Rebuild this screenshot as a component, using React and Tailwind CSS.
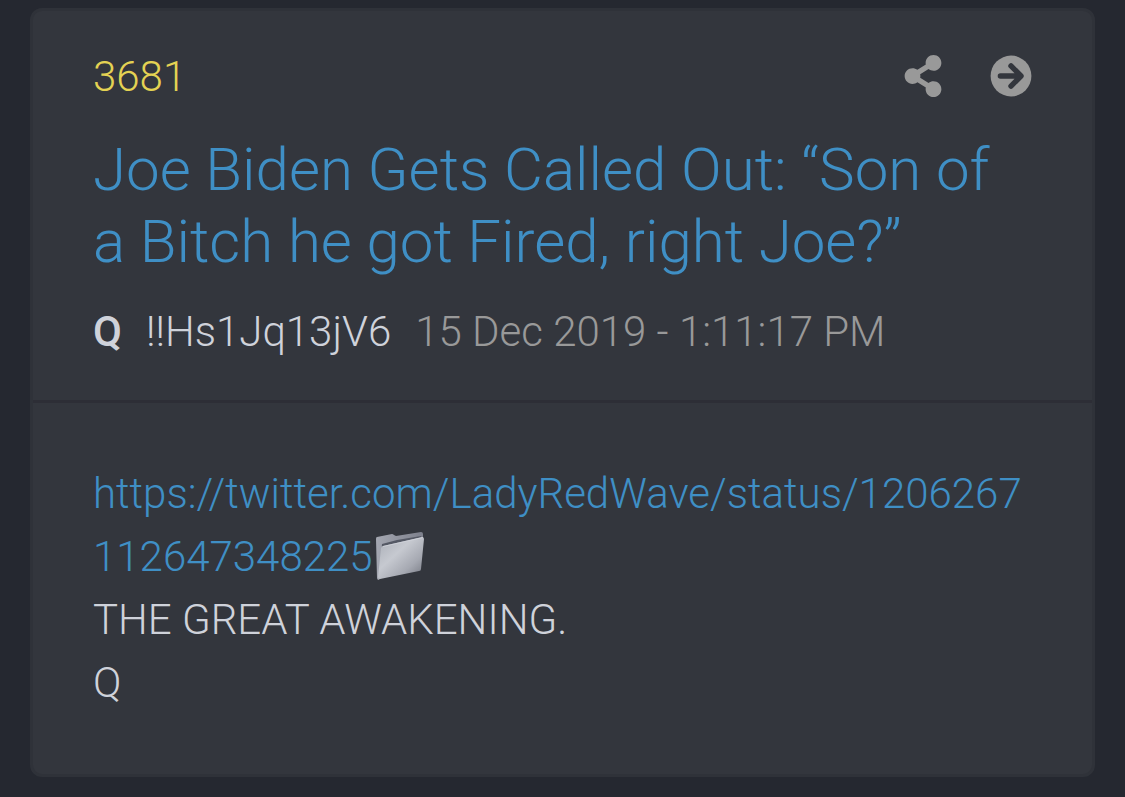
import React from 'react';
import { FaShareAlt } from 'react-icons/fa';

const post = {
  number: '3681',
  title: 'Joe Biden Gets Called Out: “Son of a Bitch he got Fired, right Joe?”',
  name: 'Q',
  trip: '!!Hs1Jq13jV6',
  date: '15 Dec 2019 - 1:11:17 PM',
  link: 'https://twitter.com/LadyRedWave/status/1206267112647348225',
  lines: ['THE GREAT AWAKENING.', 'Q'],
};

function ArrowIcon() {
  return (
    <svg viewBox="0 0 42 42" className="size-[42px]" aria-hidden="true">
      <circle cx="21" cy="21" r="20.4" fill="currentColor" />
      <path d="M10.4 21 H30 M21 10.9 L31 21 L21 31.1" fill="none" stroke="#33363d" strokeWidth="5.4" strokeLinecap="round" strokeLinejoin="round" />
    </svg>
  );
}

function FolderIcon() {
  return (
    <svg viewBox="0 0 52 57" className="inline-block w-[52px] h-[57px] align-bottom" aria-hidden="true">
      <defs>
        <linearGradient id="folderFront" x1="0" y1="0" x2="1" y2="1">
          <stop offset="0" stopColor="#a9adb6" />
          <stop offset="0.4" stopColor="#c6c9d0" />
          <stop offset="0.7" stopColor="#a6a9b2" />
          <stop offset="1" stopColor="#70737d" />
        </linearGradient>
        <linearGradient id="folderBack" x1="0" y1="0" x2="1" y2="0">
          <stop offset="0" stopColor="#a4a7b1" />
          <stop offset="1" stopColor="#7d808c" />
        </linearGradient>
      </defs>
      <path d="M4 6 L19 3 Q20 3 21 4 L23 5 L48 1 Q50 1 50 3 L50 8 L10 42 L6 49 Q4 49 4 47 L3 8 Q3 6 4 6 Z" fill="url(#folderBack)" />
      <path d="M9 13 L24 9 L48 5 L49 8 L9 17 L7 36 Z" fill="#555965" />
      <path d="M10 15 L49 6 Q51 6 51 8 L48 38 Q48 40 46 40 L7 48 Q5 48 5 46 L8 17 Q8 15 10 15 Z" fill="url(#folderFront)" />
      <path d="M10 15.5 L50 6.5" stroke="#d0d3da" strokeWidth="0.8" />
    </svg>
  );
}

export default function App() {
  return (
    <div className="min-h-screen bg-[#252830] px-[30px] pt-2 pb-5 font-[Roboto,sans-serif] font-light">
      <article className="rounded-xl border-3 border-[#2f3239] bg-[#33363d]">
        <header className="border-b-3 border-[#2d2e36] px-[60px] pt-[41px] pb-[43px]">
          <div className="flex items-center justify-between">
            <span className="text-[42px] leading-[50px] text-[#e4d253]">{post.number}</span>
            <div className="flex items-center gap-[46px] pb-[3px] text-[#999999]">
              <button aria-label="Share"><FaShareAlt size={42} /></button>
              <button aria-label="Open post"><ArrowIcon /></button>
            </div>
          </div>
          <h1 className="mt-8 text-[60px] leading-[72px] text-[#3f8fc5]">{post.title}</h1>
          <p className="mt-[29px] flex text-[42px] leading-[50px] text-[#cfd2da]">
            <strong className="mr-6 font-medium">{post.name}</strong>
            <span className="mr-6">{post.trip}</span>
            <time className="text-[#999999]">{post.date}</time>
          </p>
        </header>
        <div className="px-[60px] pt-[59px] pb-[60px] text-[42px] leading-[63px] text-[#cfd2da]">
          <a href={post.link} className="break-all text-[#3f8fc5]">{post.link}</a>
          <FolderIcon />
          {post.lines.map(line => <p key={line}>{line}</p>)}
        </div>
      </article>
    </div>
  );
}
